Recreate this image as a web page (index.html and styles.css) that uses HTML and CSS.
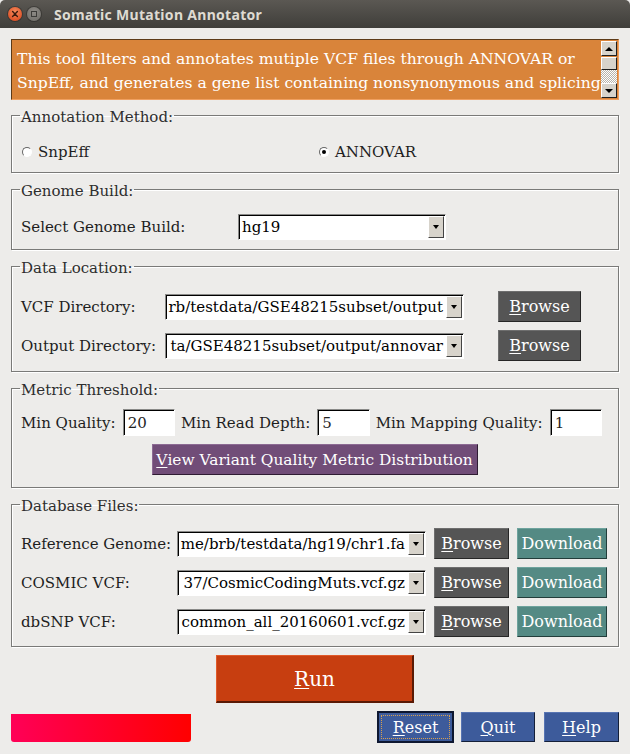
FILE: index.html
```html
<!DOCTYPE html>
<html lang="en">
<head>
<meta charset="utf-8">
<title>Somatic Mutation Annotator</title>
<link rel="stylesheet" href="styles.css">
</head>
<body>
<div class="window">
  <header class="titlebar">
    <span class="tb-btn tb-close"><svg width="14" height="14" viewBox="0 0 14 14"><path d="M4.6 4.6 L9.4 9.4 M9.4 4.6 L4.6 9.4" stroke="#3a1a0e" stroke-width="1.4" stroke-linecap="round"/></svg></span>
    <span class="tb-btn tb-min"><span class="tb-sq"></span></span>
    <span class="tb-title">Somatic Mutation Annotator</span>
  </header>

  <main class="content">
    <div class="desc">
      <p class="desc-text">This tool filters and annotates mutiple VCF files through ANNOVAR or<br>SnpEff, and generates a gene list containing nonsynonymous and splicing</p>
      <div class="vscroll">
        <span class="sb-btn"><span class="tri-up"></span></span>
        <span class="sb-thumb"></span>
        <span class="sb-trough"></span>
        <span class="sb-btn"><span class="tri-down"></span></span>
      </div>
    </div>

    <fieldset class="group g-annot">
      <legend>Annotation Method:</legend>
      <div class="radios">
        <label class="radio"><span class="rb"></span>SnpEff</label>
        <label class="radio"><span class="rb on"></span>ANNOVAR</label>
      </div>
    </fieldset>

    <fieldset class="group g-genome">
      <legend>Genome Build:</legend>
      <div class="genome-row">
        <span class="lbl">Select Genome Build:</span>
        <div class="combo combo-genome"><span class="combo-field"><span class="combo-text">hg19</span></span><span class="combo-arrow"><span class="tri-down"></span></span></div>
      </div>
    </fieldset>

    <fieldset class="group g-data">
      <legend>Data Location:</legend>
      <div class="data-grid">
        <span class="lbl">VCF Directory:</span>
        <div class="combo"><span class="combo-field right"><span class="combo-text">rb/testdata/GSE48215subset/output</span></span><span class="combo-arrow"><span class="tri-down"></span></span></div>
        <button class="btn btn-grey"><u>B</u>rowse</button>
        <span class="lbl">Output Directory:</span>
        <div class="combo"><span class="combo-field right"><span class="combo-text">ta/GSE48215subset/output/annovar</span></span><span class="combo-arrow"><span class="tri-down"></span></span></div>
        <button class="btn btn-grey"><u>B</u>rowse</button>
      </div>
    </fieldset>

    <fieldset class="group g-metric">
      <legend>Metric Threshold:</legend>
      <div class="metric-row">
        <span class="lbl">Min Quality:</span><span class="entry">20</span>
        <span class="lbl">Min Read Depth:</span><span class="entry">5</span>
        <span class="lbl">Min Mapping Quality:</span><span class="entry">1</span>
      </div>
      <div class="metric-btn-row">
        <button class="btn btn-purple"><u>V</u>iew Variant Quality Metric Distribution</button>
      </div>
    </fieldset>

    <fieldset class="group g-db">
      <legend>Database Files:</legend>
      <div class="db-grid">
        <span class="lbl">Reference Genome:</span>
        <div class="combo"><span class="combo-field right"><span class="combo-text">me/brb/testdata/hg19/chr1.fa</span></span><span class="combo-arrow"><span class="tri-down"></span></span></div>
        <button class="btn btn-grey"><u>B</u>rowse</button>
        <button class="btn btn-teal">Download</button>

        <span class="lbl">COSMIC VCF:</span>
        <div class="combo"><span class="combo-field right"><span class="combo-text">37/CosmicCodingMuts.vcf.gz</span></span><span class="combo-arrow"><span class="tri-down"></span></span></div>
        <button class="btn btn-grey"><u>B</u>rowse</button>
        <button class="btn btn-teal">Download</button>

        <span class="lbl">dbSNP VCF:</span>
        <div class="combo"><span class="combo-field right"><span class="combo-text">common_all_20160601.vcf.gz</span></span><span class="combo-arrow"><span class="tri-down"></span></span></div>
        <button class="btn btn-grey"><u>B</u>rowse</button>
        <button class="btn btn-teal">Download</button>
      </div>
    </fieldset>

    <div class="run-row">
      <button class="btn btn-run"><u>R</u>un</button>
    </div>

    <div class="bottom-row">
      <div class="progress"></div>
      <div class="actions">
        <button class="btn btn-blue focused"><span class="focus-ring"><u>R</u>eset</span></button>
        <button class="btn btn-blue btn-quit"><u>Q</u>uit</button>
        <button class="btn btn-blue btn-help"><u>H</u>elp</button>
      </div>
    </div>
  </main>
</div>
</body>
</html>
```

FILE: styles.css
```css
* { box-sizing: border-box; }

body {
  margin: 0;
  background: #edecea;
  font-family: "DejaVu Serif", serif;
  color: #1e1e1e;
}

.window {
  width: 630px;
  height: 754px;
  display: flex;
  flex-direction: column;
  overflow: hidden;
}

/* title bar */
.titlebar {
  height: 28px;
  flex: none;
  display: flex;
  align-items: center;
  padding-left: 8px;
  background: linear-gradient(#5b5853, #3f3e3a);
  border-top-left-radius: 5px;
  border-top-right-radius: 5px;
}
.tb-btn {
  width: 14px;
  height: 14px;
  border-radius: 50%;
  display: flex;
  align-items: center;
  justify-content: center;
}
.tb-close {
  background: radial-gradient(circle at 50% 35%, #f58a5c, #e0552a 70%, #c8481f);
  box-shadow: 0 0 0 1px rgba(0,0,0,0.25);
}
.tb-min {
  margin-left: 5px;
  background: radial-gradient(circle at 50% 35%, #8e8b86, #6d6b66);
  box-shadow: 0 0 0 1px rgba(0,0,0,0.25);
}
.tb-sq {
  width: 6px;
  height: 6px;
  border: 1px solid #3c3b38;
}
.tb-title {
  margin-left: 13px;
  font-family: "Noto Sans", "DejaVu Sans", sans-serif;
  font-weight: bold;
  font-size: 14px;
  color: #dfdbd2;
  letter-spacing: 0.3px;
}

/* content */
.content {
  flex: 1;
  display: flex;
  flex-direction: column;
  padding: 11px 11px 0 11px;
}

/* description */
.desc {
  height: 61px;
  display: flex;
  background: #d9843a;
  border: 1px solid;
  border-color: #5c3a18 #f0a060 #f0a060 #5c3a18;
  overflow: hidden;
}
.desc-text {
  flex: 1;
  min-width: 0;
  margin: 0;
  padding: 7px 0 0 5px;
  color: #fff;
  font-size: 15.6px;
  line-height: 24px;
  white-space: nowrap;
  overflow: hidden;
}
.vscroll {
  width: 16px;
  flex: none;
  margin: 1px 1px 1px 0;
  display: flex;
  flex-direction: column;
}
.sb-btn {
  height: 15px;
  display: flex;
  align-items: center;
  justify-content: center;
  background: #d7d3cb;
  border: 1px solid;
  border-color: #fff #1e1e1e #1e1e1e #fff;
}
.sb-thumb {
  height: 13px;
  margin-top: 1px;
  background: #d7d3cb;
  border: 1px solid;
  border-color: #fff #1e1e1e #1e1e1e #fff;
}
.sb-trough {
  flex: 1;
  background: repeating-conic-gradient(#ffffff 0 25%, #b9b4ab 0 50%) 0 0 / 2px 2px;
}
.tri-up, .tri-down {
  width: 0;
  height: 0;
  border-left: 4px solid transparent;
  border-right: 4px solid transparent;
}
.tri-up { border-bottom: 4px solid #000; }
.tri-down { border-top: 4px solid #000; }

/* groups */
.group {
  margin: 5px 0 0 0;
  padding: 0 10px 9px 9px;
  border: 1px solid #7a7a78;
  box-shadow: 1px 1px 0 #fff, inset 1px 1px 0 #fff;
  min-width: 0;
}
.group legend {
  padding: 4px 1px 0 1px;
  margin-left: -1px;
  font-size: 15px;
  line-height: 18px;
  color: #2e2e2e;
}
.g-annot { margin-top: 4px; padding-bottom: 10px; }

.lbl {
  font-size: 15px;
  color: #1e1e1e;
  white-space: nowrap;
}

/* annotation radios */
.radios {
  display: grid;
  grid-template-columns: 297px 1fr;
  padding-top: 16px;
  height: 36px;
  align-items: center;
}
.radio {
  display: flex;
  align-items: center;
  gap: 6px;
  font-size: 15px;
  padding-left: 1px;
}
.rb {
  width: 10px;
  height: 10px;
  border-radius: 50%;
  border: 1px solid;
  border-color: #666 #fff #fff #666;
  background: #fff;
  display: flex;
  align-items: center;
  justify-content: center;
}
.rb.on::after {
  content: "";
  width: 4px;
  height: 4px;
  border-radius: 50%;
  background: #000;
}

/* combobox */
.combo {
  display: flex;
  height: 26px;
  background: #fff;
  border: 1px solid;
  border-color: #8a8a88 #fff #fff #8a8a88;
  box-shadow: inset 1px 1px 0 #000;
  padding: 1px;
  min-width: 0;
}
.combo-field {
  flex: 1;
  min-width: 0;
  display: flex;
  align-items: center;
  overflow: hidden;
  white-space: nowrap;
  padding-left: 2px;
  padding-right: 3px;
  font-size: 15px;
  color: #000;
}
.combo-field.right { justify-content: flex-end; }
.combo-arrow {
  width: 16px;
  flex: none;
  display: flex;
  align-items: center;
  justify-content: center;
  background: #d7d3cb;
  border: 1px solid;
  border-color: #fff #444 #444 #fff;
}
.combo-arrow .tri-down {
  border-left-width: 3px;
  border-right-width: 3px;
  border-top-width: 4px;
}

/* genome */
.genome-row {
  display: grid;
  grid-template-columns: 217px 208px;
  align-items: center;
  padding-top: 14px;
}

/* buttons */
.btn {
  font-family: "DejaVu Serif", serif;
  font-size: 16px;
  color: #fff;
  border: 1px solid;
  padding: 0;
  margin: 0;
  height: 31px;
  display: flex;
  align-items: center;
  justify-content: center;
  white-space: nowrap;
}
.btn u { text-decoration-thickness: 1px; text-underline-offset: 2px; }
.btn-grey {
  background: #555555;
  border-color: #6e6e6e #262626 #262626 #6e6e6e;
}
.btn-teal {
  background: #548a84;
  border-color: #6ea39d #223d3a #223d3a #6ea39d;
}
.btn-purple {
  width: 326px;
  font-size: 15.4px;
  background: #714d78;
  border-color: #8c6a93 #2f1c33 #2f1c33 #8c6a93;
}
.btn-blue {
  background: #3d5b9b;
  border-color: #5774b2 #141f38 #141f38 #5774b2;
}
.btn-run {
  width: 198px;
  height: 48px;
  background: #c73e10;
  border-color: #e05a2a #5a1a05 #5a1a05 #e05a2a;
  border-width: 1px 2px 2px 1px;
  font-size: 20px;
}

/* data location */
.data-grid {
  display: grid;
  grid-template-columns: 144px 299px 83px;
  row-gap: 8px;
  grid-auto-rows: 31px;
  align-items: center;
  padding-top: 14px;
  padding-bottom: 1px;
}
.data-grid .btn { margin-left: 34px; width: 83px; }

/* metric */
.metric-row {
  display: flex;
  align-items: center;
  padding-top: 10px;
}
.entry {
  width: 53px;
  height: 27px;
  margin: 0 6px 0 7px;
  display: flex;
  align-items: center;
  padding-left: 4px;
  background: #fff;
  border: 1px solid;
  border-color: #8a8a88 #fff #fff #8a8a88;
  box-shadow: inset 1px 1px 0 #000;
  font-size: 15px;
}
.metric-btn-row {
  display: flex;
  justify-content: center;
  padding-top: 8px;
  padding-bottom: 3px;
}

/* database */
.db-grid {
  display: grid;
  grid-template-columns: 148px 249px 75px 90px;
  column-gap: 8px;
  row-gap: 8px;
  grid-auto-rows: 31px;
  align-items: center;
  padding-top: 13px;
}

/* run */
.run-row {
  display: flex;
  justify-content: center;
  padding-top: 8px;
}

/* bottom */
.bottom-row {
  display: flex;
  align-items: center;
  justify-content: space-between;
  padding-top: 8px;
}
.progress {
  width: 180px;
  height: 28px;
  margin-top: 2px;
  background: linear-gradient(90deg, #ff0057, #ff0000);
  border-bottom-left-radius: 3px;
  border-bottom-right-radius: 3px;
}
.actions {
  display: flex;
  align-items: center;
}
.btn-blue { height: 30px; }
.focused {
  width: 77px;
  height: 32px;
  border: 2px solid #0e1730;
  padding: 2px;
}
.focus-ring {
  width: 100%;
  height: 100%;
  display: flex;
  align-items: center;
  justify-content: center;
  border: 1px dotted #d8a050;
}
.btn-quit { width: 74px; margin-left: 7px; }
.btn-help { width: 75px; margin-left: 9px; }
```
